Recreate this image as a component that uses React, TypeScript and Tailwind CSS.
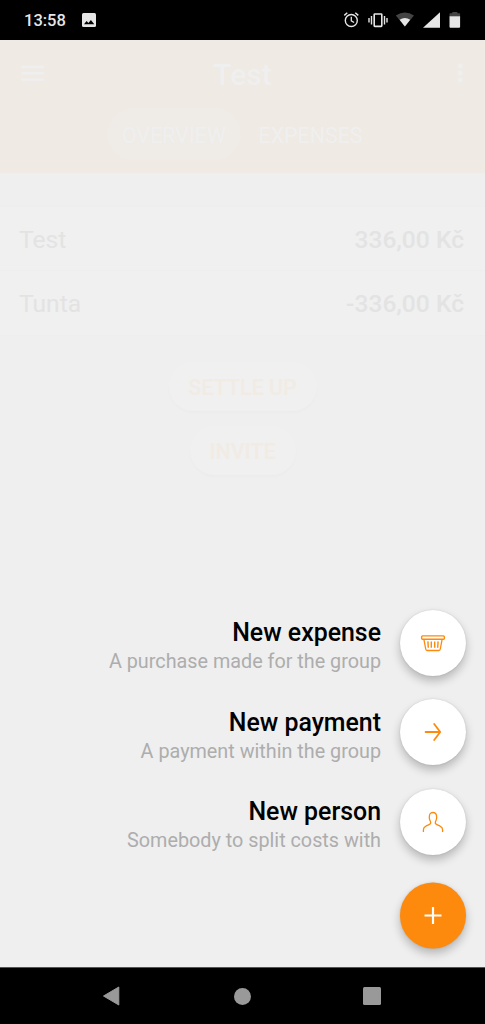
import type { ReactNode } from "react";

interface Balance {
  name: string;
  amount: string;
}

interface Action {
  title: string;
  description: string;
  icon: ReactNode;
}

const balances: Balance[] = [
  { name: "Test", amount: "336,00 Kč" },
  { name: "Tunta", amount: "-336,00 Kč" },
];

function BasketIcon() {
  return (
    <svg width="26" height="18" viewBox="0 0 26 18" fill="none" stroke="#fd8a0c">
      <rect x="1.6" y="1.9" width="22.8" height="3.3" rx="1" strokeWidth="1.4" />
      <path d="M3.9 5.4l1.8 9.6q.2 1.5 1.5 1.5h11.6q1.3 0 1.5-1.5L22.1 5.4" strokeWidth="1.3" />
      <path d="M7.9 7.4l.4 6.4M11.3 7.4v6.4M14.7 7.4v6.4M18.1 7.4l-.4 6.4" strokeWidth="1.4" />
    </svg>
  );
}

function ArrowIcon() {
  return (
    <svg width="18" height="20" viewBox="0 0 18 20" fill="none" stroke="#fd8a0c" strokeWidth="1.8">
      <path d="M1.6 10h14.6M10.2 2l6 8-6 8" strokeLinecap="round" strokeLinejoin="round" />
    </svg>
  );
}

function PersonIcon() {
  return (
    <svg width="22" height="22" viewBox="0 0 22 22" fill="none" stroke="#fd8a0c" strokeWidth="1.3">
      <path
        d="M1.4 21v-2.2c0-2 1-2.9 2.6-3.7 2.3-1.1 4.8-1.7 4.7-3.4 0-1.7-1.4-2.4-1.4-5.2 0-3.3.8-5 3.7-5s3.7 1.7 3.7 5c0 2.8-1.4 3.5-1.4 5.2-.1 1.7 2.4 2.3 4.7 3.4 1.6.8 2.6 1.7 2.6 3.7V21"
        strokeLinejoin="round"
      />
    </svg>
  );
}

const actions: Action[] = [
  { title: "New expense", description: "A purchase made for the group", icon: <BasketIcon /> },
  { title: "New payment", description: "A payment within the group", icon: <ArrowIcon /> },
  { title: "New person", description: "Somebody to split costs with", icon: <PersonIcon /> },
];

function StatusBar() {
  return (
    <div className="flex h-10 shrink-0 items-center bg-black pl-6 pr-[24px] text-[#e6e6e6]">
      <span className="w-[42px] pt-px text-[16.5px] font-medium leading-5">13:58</span>
      <svg className="ml-[15.5px]" width="14" height="14" viewBox="0 0 14 14">
        <rect width="14" height="14" rx="1.5" fill="#e6e6e6" />
        <path d="M2 11.3l2.6-3.2 1.8 2L8.9 7l3.4 4.3z" fill="#000" />
      </svg>
      <svg className="ml-auto" width="119" height="20" viewBox="0 0 119 20" fill="none" stroke="#e6e6e6">
        {/* alarm */}
        <circle cx="9.3" cy="10.5" r="6" strokeWidth="1.4" />
        <path d="M9.3 6.8v4l2.8 1.7" strokeWidth="1.3" />
        <path d="M2.3 5.4l3-2.6M16.3 5.4l-3-2.6" strokeWidth="1.4" />
        {/* vibrate */}
        <rect x="32.2" y="4" width="7.6" height="12.4" rx="0.6" strokeWidth="1.6" />
        <path d="M29.5 6v8.5M42.5 6v8.5M27 8v4.4M45 8v4.4" strokeWidth="1.4" />
        {/* wifi */}
        <path d="M62.9 16.5L53.8 5.6Q62.9-.5 72 5.6z" fill="#444" stroke="none" />
        <path d="M62.9 16.5L57.6 9.8Q62.9 6 68.2 9.8z" fill="#e6e6e6" stroke="none" />
        {/* signal */}
        <path d="M81 17.7h17V2.3z" fill="#e6e6e6" stroke="none" />
        {/* battery */}
        <path d="M107.5 6.5V4q0-.8.8-.8h2v-1.3h5v1.3h2q.8 0 .8.8v2.5z" fill="#444" stroke="none" />
        <path d="M107.5 6.3h10.6v10.5q0 .9-.9.9h-8.8q-.9 0-.9-.9z" fill="#e6e6e6" stroke="none" />
      </svg>
    </div>
  );
}

function Header() {
  return (
    <header className="h-[133px] bg-[#efeae3] text-[#efeff0]">
      <div className="grid h-[68px] grid-cols-[1fr_auto_1fr] items-center px-[21px]">
        <svg className="-mt-0.5" width="24" height="18" viewBox="0 0 24 18" stroke="#efeff0" strokeWidth="2.4">
          <path d="M.5 3h22.5M.5 9.2h22.5M.5 15.6h22.5" />
        </svg>
        <h1 className="pt-0.5 text-[30px] font-medium leading-9">Test</h1>
        <svg className="-mt-0.5 mr-[1.5px] justify-self-end" width="8" height="20" viewBox="0 0 8 20" fill="#efeff0">
          <circle cx="5.3" cy="3" r="2.5" />
          <circle cx="5.3" cy="10" r="2.5" />
          <circle cx="5.3" cy="17" r="2.5" />
        </svg>
      </div>
      <nav className="flex pl-[107px] text-[21.4px] leading-[50px]">
        <button className="h-[52px] w-[134px] rounded-full bg-[#efebe6] pt-[3px]">OVERVIEW</button>
        <button className="ml-[2.5px] h-[52px] w-[134px] pt-[3px]">EXPENSES</button>
      </nav>
    </header>
  );
}

function PillButton({ className, children }: { className: string; children: ReactNode }) {
  return (
    <button
      className={`${className} h-[49px] rounded-full bg-[#f0f0f0] pt-[3px] text-[21.5px] font-medium text-[#f1ebe4] shadow-[0_2px_3px_rgba(0,0,0,0.015)]`}
    >
      {children}
    </button>
  );
}

function ActionMenu() {
  return (
    <div className="absolute right-[19px] bottom-[76px] flex flex-col items-end">
      {actions.map(({ title, description, icon }) => (
        <div key={title} className="mb-[23.5px] flex h-[66px] items-center gap-[19px]">
          <div className="pt-[9px] text-right">
            <div className="text-[24.9px] font-medium leading-[30px] text-black">{title}</div>
            <div className="text-[19.8px] leading-7 text-[#adadad]">{description}</div>
          </div>
          <button className="flex size-[66px] items-center justify-center rounded-full bg-white shadow-[0_5px_10px_rgba(0,0,0,0.24),0_0_2px_rgba(0,0,0,0.12)]">
            {icon}
          </button>
        </div>
      ))}
      <button className="mt-[4px] flex size-[66px] translate-y-[0.5px] items-center justify-center rounded-full bg-[#fd8a0c] shadow-[0_5px_10px_rgba(0,0,0,0.24),0_0_2px_rgba(0,0,0,0.12)]">
        <svg width="18" height="18" viewBox="0 0 18 18" stroke="#fff" strokeWidth="2.2">
          <path d="M9 .5v17M.5 9h17" />
        </svg>
      </button>
    </div>
  );
}

function NavigationBar() {
  return (
    <div className="flex h-[57px] shrink-0 items-center justify-between border-t border-[#555] bg-black pl-[102px] pr-[104px]">
      <svg width="18" height="20" viewBox="0 0 18 20" fill="#999" stroke="#999" strokeLinejoin="round">
        <path d="M1.5 10L16.8 1v18z" />
      </svg>
      <div className="ml-px size-[17px] rounded-full bg-[#999]" />
      <div className="size-[18px] rounded-[1.5px] bg-[#999]" />
    </div>
  );
}

export default function App() {
  return (
    <div className="relative flex h-[1024px] w-[485px] flex-col overflow-hidden bg-[#efefef] font-['Roboto',sans-serif]">
      <StatusBar />
      <Header />
      <main className="flex-1 pt-[33px]">
        <ul className="border-y border-[#eeeeee] bg-[#f0f0f0]">
          {balances.map(({ name, amount }) => (
            <li
              key={name}
              className="flex h-16 items-center justify-between border-b border-[#eeeeee] pl-[19px] pr-[21px] pt-[3px] text-[24.6px] text-[#e3e3e3] last:border-b-0 last:pt-0.5"
            >
              <span>{name}</span>
              <span className="font-medium">{amount}</span>
            </li>
          ))}
        </ul>
        <div className="mt-[26px] flex flex-col items-center gap-[15px]">
          <PillButton className="w-[148px]">SETTLE UP</PillButton>
          <PillButton className="w-[106px]">INVITE</PillButton>
        </div>
      </main>
      <NavigationBar />
      <ActionMenu />
    </div>
  );
}
